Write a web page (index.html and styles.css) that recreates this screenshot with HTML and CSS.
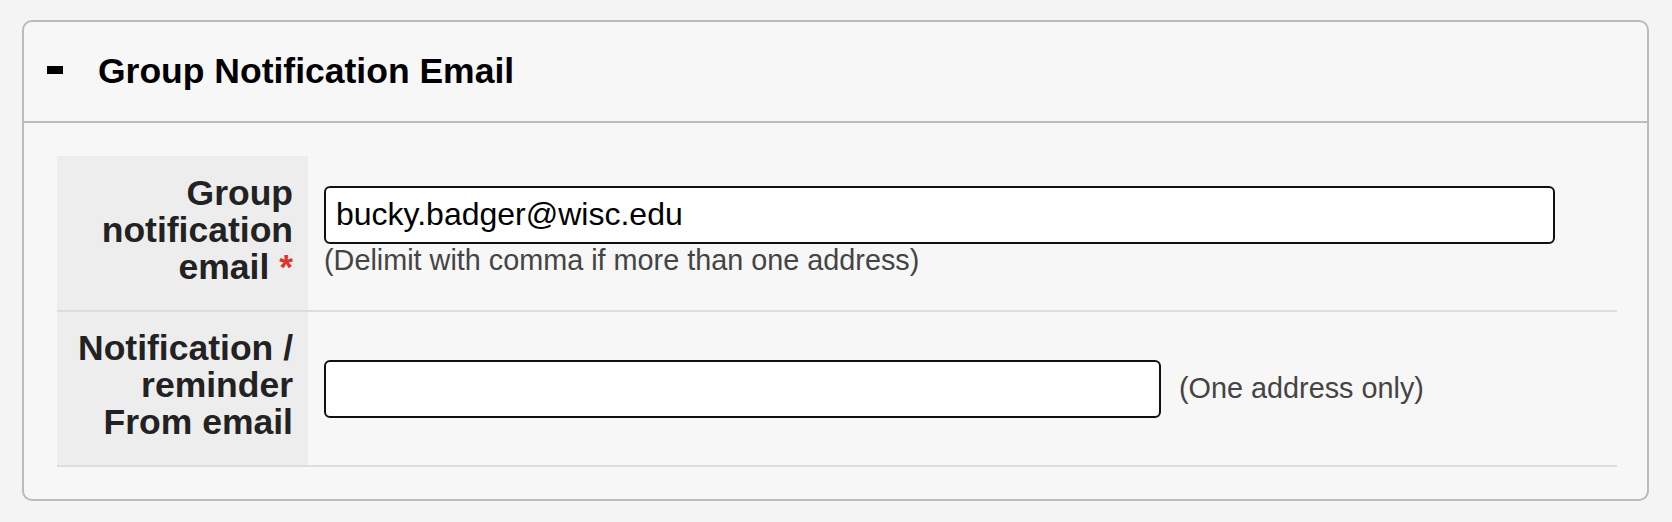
FILE: index.html
```html
<!DOCTYPE html>
<html lang="en">
<head>
  <meta charset="UTF-8" />
  <title>Group Notification Email</title>
  <meta name="viewport" content="width=device-width, initial-scale=1" />
  <link rel="stylesheet" href="styles.css">
</head>
<body>
  <div class="panel">
    <div class="panel-header">
      <span class="toggle" aria-label="collapse"></span>
      <h2>Group Notification Email</h2>
    </div>

    <div class="panel-body">
      <div class="form-row">
        <label class="form-label" for="groupEmail"><span>Group notification email <span class="required">*</span></span></label>
        <div class="form-value stacked">
          <input type="text" id="groupEmail" class="wide" value="bucky.badger@wisc.edu" />
          <div class="hint">(Delimit with comma if more than one address)</div>
        </div>
      </div>

      <div class="form-row">
        <label class="form-label" for="fromEmail"><span>Notification / reminder From email</span></label>
        <div class="form-value inline">
          <input type="text" id="fromEmail" class="medium" />
          <span class="hint">(One address only)</span>
        </div>
      </div>
    </div>
  </div>
</body>
</html>
```

FILE: styles.css
```css
body {
  margin: 0;
  padding: 20px 23px 0 22px;
  background: #f4f4f4;
  font-family: "Liberation Sans", Arial, sans-serif;
  color: #222;
}

/* panel */
.panel {
  border: 2px solid #bbb;
  border-radius: 10px;
  background: #f7f7f7;
}
.panel-header {
  display: flex;
  align-items: center;
  height: 99px;
  padding-left: 23px;
  border-bottom: 2px solid #bbb;
}
.toggle {
  width: 16px;
  height: 8px;
  background: #000;
  margin-right: 35px;
  margin-bottom: 4px;
}
.panel-header h2 {
  margin: 0;
  font-size: 35.5px;
  font-weight: bold;
  color: #000;
}
.panel-body {
  padding: 33px 30px 32px 33px;
}

/* rows */
.form-row {
  display: grid;
  grid-template-columns: 251px 1fr;
  height: 154px;
  border-bottom: 2px solid #ddd;
}
.form-row + .form-row {
  height: 153px;
}
.form-label {
  display: flex;
  align-items: center;
  justify-content: flex-end;
  padding: 0 15px 6px 10px;
  background: #ededed;
  text-align: right;
  font-size: 35.5px;
  line-height: 37px;
  font-weight: bold;
  color: #222;
}
.required {
  color: #e0342a;
}
.form-value {
  padding-left: 16px;
  display: flex;
}
.form-value.stacked {
  flex-direction: column;
  justify-content: center;
  padding-bottom: 4px;
}
.form-value.inline {
  align-items: center;
}

input {
  box-sizing: border-box;
  height: 58px;
  padding: 0 10px;
  border: 2px solid #111;
  border-radius: 6px;
  background: #fff;
  font-family: "Liberation Sans", Arial, sans-serif;
  font-size: 32px;
  color: #000;
}
input.wide {
  width: 1231px;
}
input.medium {
  width: 837px;
}
.hint {
  font-size: 28.8px;
  color: #444;
}
.inline .hint {
  margin-left: 18px;
}
```
